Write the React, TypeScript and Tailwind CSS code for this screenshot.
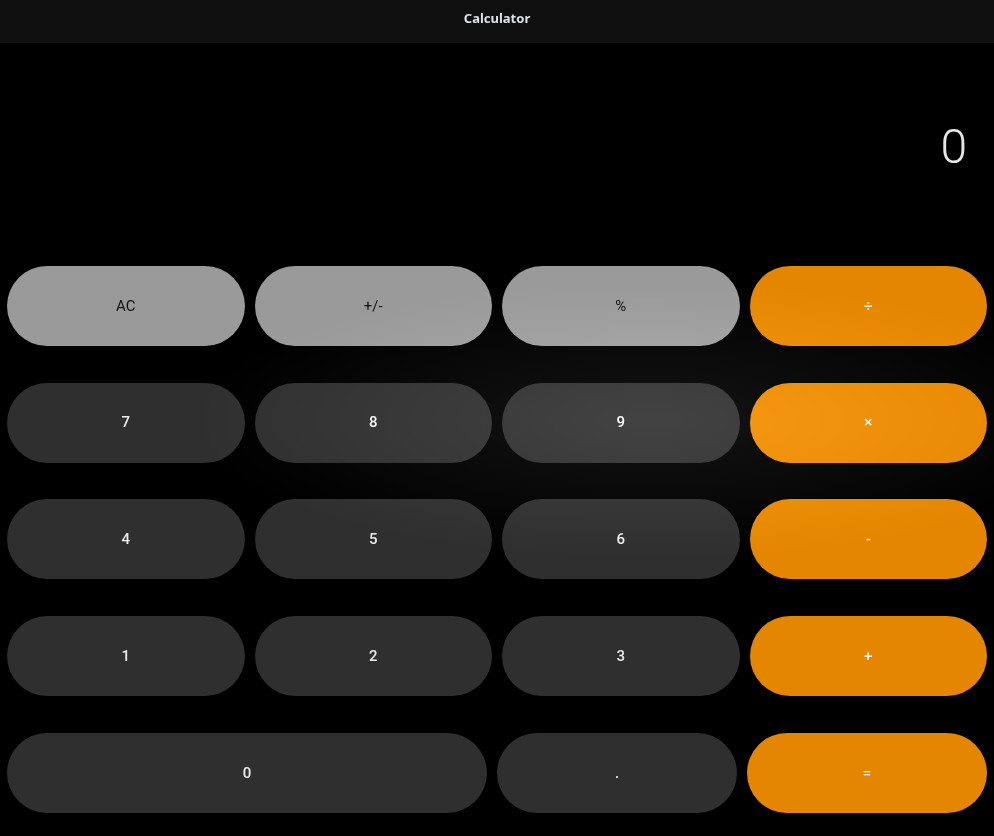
import React from "react";

type Kind = "fn" | "num" | "op";

const Btn = ({ label, kind, className = "" }: { label: string; kind: Kind; className?: string }) => {
  const base =
    kind === "fn"
      ? "bg-[#9a9a9a] text-[#111] font-normal"
      : kind === "op"
      ? "bg-[#e58600] text-[#f4f4f4] font-medium"
      : "bg-[#2f2f2f] text-[#ececec] font-medium";
  return (
    <button
      className={`h-[80px] rounded-full flex items-center justify-center text-[15px] ${base} ${className}`}
      style={{ fontFamily: "Roboto, 'Liberation Sans', sans-serif" }}
    >
      {label}
    </button>
  );
};

export default function App() {
  const rows: { label: string; kind: Kind }[][] = [
    [
      { label: "AC", kind: "fn" },
      { label: "+/-", kind: "fn" },
      { label: "%", kind: "fn" },
      { label: "÷", kind: "op" },
    ],
    [
      { label: "7", kind: "num" },
      { label: "8", kind: "num" },
      { label: "9", kind: "num" },
      { label: "×", kind: "op" },
    ],
    [
      { label: "4", kind: "num" },
      { label: "5", kind: "num" },
      { label: "6", kind: "num" },
      { label: "-", kind: "op" },
    ],
    [
      { label: "1", kind: "num" },
      { label: "2", kind: "num" },
      { label: "3", kind: "num" },
      { label: "+", kind: "op" },
    ],
  ];
  return (
    <div className="relative w-[994px] h-[836px] bg-black flex flex-col overflow-hidden">
      <div
        className="h-[43px] shrink-0 bg-[#0f0f0f] flex items-start justify-center pt-[9px] leading-[18px] text-[13px] font-bold text-[#dbe3ea]"
        style={{ fontFamily: "'Noto Sans', 'Open Sans', sans-serif" }}
      >
        Calculator
      </div>
      <div className="h-[223px] shrink-0 flex items-start justify-end pt-[80px] pr-[27px]">
        <span
          className="text-[48px] leading-none font-light text-[#e6e6e6]"
          style={{ fontFamily: "Roboto, 'Liberation Sans', sans-serif" }}
        >
          0
        </span>
      </div>
      <div className="flex flex-col gap-[36.7px] px-[7px]">
        {rows.map((row, i) => (
          <div key={i} className="grid grid-cols-4 gap-[10px]">
            {row.map((b) => (
              <Btn key={b.label} label={b.label} kind={b.kind} />
            ))}
          </div>
        ))}
        <div className="flex gap-[10px]">
          <Btn label="0" kind="num" className="flex-[2]" />
          <Btn label="." kind="num" className="flex-1" />
          <Btn label="=" kind="op" className="flex-1" />
        </div>
      </div>
      <div className="pointer-events-none absolute inset-0 mix-blend-plus-lighter bg-[radial-gradient(ellipse_460px_140px_at_650px_420px,rgba(255,255,255,0.08),rgba(255,255,255,0.03)_60%,transparent)]" />
    </div>
  );
}
